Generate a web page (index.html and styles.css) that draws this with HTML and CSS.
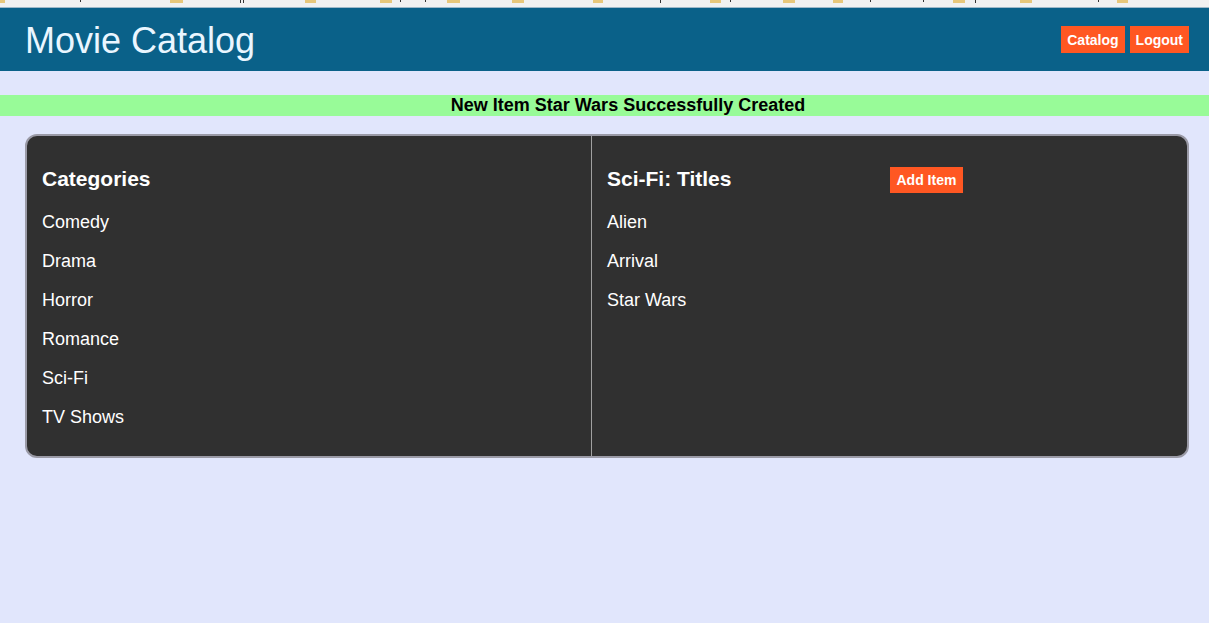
FILE: index.html
```html
<!DOCTYPE html>
<html lang="en">
<head>
<meta charset="utf-8">
<title>Movie Catalog</title>
<link rel="stylesheet" href="styles.css">
</head>
<body>
<div class="browser-strip">
  <svg class="strip-art" width="1209" height="8" viewBox="0 0 1209 8">
    <g fill="#e8c77a">
      <rect x="0" y="0" width="5" height="3"/>
      <rect x="170" y="0" width="13" height="3"/>
      <rect x="305" y="0" width="11" height="3"/>
      <rect x="380" y="0" width="12" height="3"/>
      <rect x="447" y="0" width="13" height="3"/>
      <rect x="512" y="0" width="12" height="3"/>
      <rect x="593" y="0" width="10" height="3"/>
      <rect x="710" y="0" width="11" height="3"/>
      <rect x="783" y="0" width="12" height="3"/>
      <rect x="833" y="0" width="10" height="3"/>
      <rect x="953" y="0" width="12" height="3"/>
      <rect x="1020" y="0" width="12" height="3"/>
      <rect x="1117" y="0" width="11" height="3"/>
    </g>
    <g fill="#333">
      <rect x="80" y="0" width="1" height="2"/>
      <rect x="240" y="0" width="1" height="3"/>
      <rect x="243" y="0" width="1" height="3"/>
      <rect x="400" y="0" width="1" height="2"/>
      <rect x="425" y="0" width="1" height="2"/>
      <rect x="660" y="0" width="1" height="3"/>
      <rect x="730" y="0" width="1" height="2"/>
      <rect x="870" y="0" width="1" height="2"/>
      <rect x="923" y="0" width="1" height="2"/>
      <rect x="975" y="0" width="1" height="3"/>
      <rect x="1098" y="0" width="1" height="2"/>
    </g>
  </svg>
</div>
<header class="topbar">
  <h1 class="brand">Movie Catalog</h1>
  <nav class="nav">
    <a class="btn" href="#">Catalog</a>
    <a class="btn" href="#">Logout</a>
  </nav>
</header>
<div class="flash">New Item Star Wars Successfully Created</div>
<main class="card">
  <section class="col col-left">
    <div class="col-head">
      <h2 class="col-title">Categories</h2>
    </div>
    <ul class="list">
      <li>Comedy</li>
      <li>Drama</li>
      <li>Horror</li>
      <li>Romance</li>
      <li>Sci-Fi</li>
      <li>TV Shows</li>
    </ul>
  </section>
  <section class="col col-right">
    <div class="col-head split">
      <h2 class="col-title half">Sci-Fi: Titles</h2>
      <div class="half"><a class="btn btn-add" href="#">Add Item</a></div>
    </div>
    <ul class="list">
      <li>Alien</li>
      <li>Arrival</li>
      <li>Star Wars</li>
    </ul>
  </section>
</main>
</body>
</html>
```

FILE: styles.css
```css
* { box-sizing: border-box; }

html, body {
  margin: 0;
  padding: 0;
}

body {
  background: #e1e6fc;
  font-family: "Liberation Sans", Arial, sans-serif;
  color: #000;
  min-height: 623px;
}

.browser-strip {
  height: 8px;
  background: #f1f1f1;
  border-bottom: 1px solid #9fb9c9;
  overflow: hidden;
}

.strip-art { display: block; }

.topbar {
  height: 63px;
  background: #0a6189;
  display: flex;
  align-items: center;
  justify-content: space-between;
  padding: 0 20px 0 25px;
}

.brand {
  margin: 0;
  font-size: 36px;
  font-weight: normal;
  color: #eaf6ff;
  line-height: 1;
  padding-top: 2px;
}

.nav {
  display: flex;
  gap: 5px;
}

.btn {
  display: inline-block;
  background: #ff5722;
  color: #fff;
  font-weight: bold;
  font-size: 14px;
  text-decoration: none;
  height: 27px;
  line-height: 26px;
  padding: 1px 6px 0;
}

.flash {
  margin-top: 24px;
  height: 21px;
  line-height: 21px;
  background: #98fb98;
  text-align: center;
  font-weight: bold;
  font-size: 18px;
  color: #000;
  padding-left: 47px;
}

.card {
  margin: 18px 20px 0 25px;
  height: 324px;
  background: #303030;
  border: 2px solid #9a9aa6;
  border-radius: 12px;
  display: flex;
  color: #fff;
}

.col {
  padding: 31px 15px 0 15px;
}

.col-left {
  flex: 0 0 564px;
}

.col-right {
  flex: 1 1 0;
  border-left: 1px solid #a0a0a0;
}

.col-head {
  height: 26px;
  display: flex;
  align-items: flex-start;
}

.split .half {
  flex: 1 1 0;
}

.col-title {
  margin: 0;
  font-size: 21px;
  font-weight: bold;
  line-height: 24px;
}

.btn-add {
  height: 26px;
  line-height: 25px;
  padding: 1px 7px 0;
}

.list {
  list-style: none;
  margin: 0;
  padding: 0;
}

.list li {
  font-size: 18px;
  line-height: 21px;
  margin-top: 18px;
}

.list li:first-child {
  margin-top: 19px;
}
```
